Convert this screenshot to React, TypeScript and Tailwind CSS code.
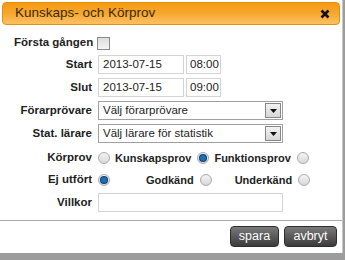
import React from 'react';

const Radio = ({ checked }: { checked?: boolean }) => (
  <span className="relative inline-block h-[12px] w-[12px] shrink-0 rounded-full border border-[#a9a9a9] bg-gradient-to-b from-[#f4f4f4] to-[#d8d8d8]">
    {checked && (
      <span className="absolute left-[2px] top-[2px] h-[6px] w-[6px] rounded-full bg-[#1c6fb8] ring-1 ring-[#0d3f6e]" />
    )}
  </span>
);

const Label = ({ children }: { children: React.ReactNode }) => (
  <span className="w-[90px] shrink-0 whitespace-nowrap text-right font-bold">{children}</span>
);

const SelectBox = ({ text }: { text: string }) => (
  <div className="flex h-[19px] w-[185px] items-center justify-between border border-[#a0a0a0] bg-white pl-[4px] pr-[1px]">
    <span>{text}</span>
    <span className="flex h-[15px] w-[16px] items-center justify-center border border-[#888] bg-gradient-to-b from-[#f2f2f2] to-[#d6d6d6]">
      <svg width="7" height="4" viewBox="0 0 7 4">
        <path d="M0 0h7L3.5 4z" fill="#111" />
      </svg>
    </span>
  </div>
);

export default function App() {
  return (
    <div className="flex h-[260px] w-[345px] flex-col bg-[#9c9c9c] text-[11.5px] text-[#222]" style={{ fontFamily: '"Liberation Sans", Arial, sans-serif' }}>
      <div className="flex h-[253px] w-[343px] flex-col border-r border-[#c8c8c8] bg-white">
        <div className="mx-[2px] mt-[2px] flex h-[23px] items-center justify-between rounded-[4px] border border-[#e78f08] bg-gradient-to-b from-[#f49a10] via-[#f7a82c] to-[#fbc063] pl-[12px] pr-[9px]">
          <span className="text-[13.5px] text-[#3a2a10]">Kunskaps- och Körprov</span>
          <svg width="10" height="10" viewBox="0 0 10 10">
            <path d="M1.5 1.5l7 7M8.5 1.5l-7 7" stroke="#111" strokeWidth="2.6" />
          </svg>
        </div>

        <div className="flex flex-col pl-[2px] pt-[10px]">
          <div className="flex h-[16px] items-center gap-[3px]">
            <span className="w-[92px] shrink-0 whitespace-nowrap pl-[12px] font-bold">Första gången</span>
            <span className="h-[13px] w-[13px] border border-[#8a8a8a] bg-gradient-to-b from-[#dcdcdc] to-[#f4f4f4]" />
          </div>

          <div className="mt-[4px] flex h-[19px] items-center gap-[6px]">
            <Label>Start</Label>
            <div className="flex gap-[2px]">
              <span className="flex h-[19px] w-[86px] items-center border border-[#d4d4d4] pl-[4px]">2013-07-15</span>
              <span className="flex h-[19px] w-[35px] items-center border border-[#d4d4d4] pl-[3px]">08:00</span>
            </div>
          </div>

          <div className="mt-[4px] flex h-[19px] items-center gap-[6px]">
            <Label>Slut</Label>
            <div className="flex gap-[2px]">
              <span className="flex h-[19px] w-[86px] items-center border border-[#d4d4d4] pl-[4px]">2013-07-15</span>
              <span className="flex h-[19px] w-[35px] items-center border border-[#d4d4d4] pl-[3px]">09:00</span>
            </div>
          </div>

          <div className="mt-[4px] flex h-[19px] items-center gap-[6px]">
            <Label>Förarprövare</Label>
            <SelectBox text="Välj förarprövare" />
          </div>

          <div className="mt-[4px] flex h-[19px] items-center gap-[6px]">
            <Label>Stat. lärare</Label>
            <SelectBox text="Välj lärare för statistik" />
          </div>

          <div className="mt-[7px] flex h-[16px] items-center gap-[6px]">
            <Label>Körprov</Label>
            <Radio />
            <span className="ml-[-1px] text-[11px] font-bold">Kunskapsprov</span>
            <Radio checked />
            <span className="ml-[-1px] text-[11px] font-bold">Funktionsprov</span>
            <Radio />
          </div>

          <div className="mt-[6px] flex h-[16px] items-center gap-[6px]">
            <Label>Ej utfört</Label>
            <Radio checked />
            <span className="ml-[30px] text-[11px] font-bold">Godkänd</span>
            <Radio />
            <span className="ml-[17px] text-[11px] font-bold">Underkänd</span>
            <Radio />
          </div>

          <div className="mt-[5px] flex h-[19px] items-center gap-[6px]">
            <Label>Villkor</Label>
            <span className="h-[19px] w-[185px] border border-[#d4d4d4]" />
          </div>
        </div>

        <div className="mt-[8px] border-t border-[#a8a8a8]" />
        <div className="flex justify-end gap-[5px] pr-[5px] pt-[5px]">
          <button className="h-[21px] w-[49px] rounded-[4px] border border-[#2e2e2e] bg-gradient-to-b from-[#7a7a7a] to-[#3c3c3c] text-[12.5px] text-white">spara</button>
          <button className="h-[21px] w-[53px] rounded-[4px] border border-[#2e2e2e] bg-gradient-to-b from-[#7a7a7a] to-[#3c3c3c] text-[12.5px] text-white">avbryt</button>
        </div>
      </div>
    </div>
  );
}
